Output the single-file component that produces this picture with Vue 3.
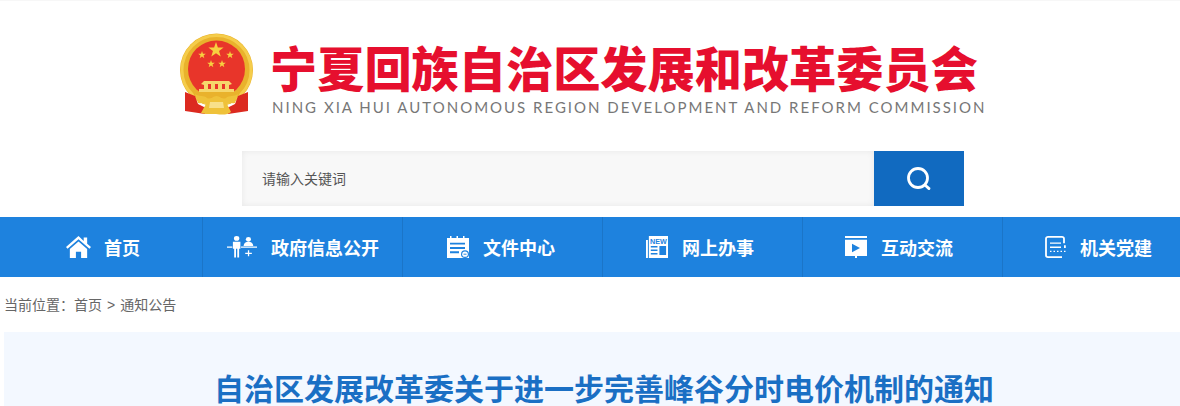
<template>
  <div class="page">
    <header class="header">
      <div class="logo">
        <svg class="emblem" width="76" height="84" viewBox="0 0 76 84">
          <circle cx="37.500" cy="38" r="36.500" fill="#e9b22c" />
          <circle cx="37.500" cy="38" r="34.500" fill="none" stroke="#f5cd4b" stroke-width="3" />
          <circle cx="37.500" cy="37" r="28.500" fill="#e8352a" />
          <polygon v-for="s in stars" :key="s.x" :points="star(s.x, s.y, s.r)" fill="#f7d040" />
          <path d="M25 49h25l3 3-3 1v4h5v4H20v-4h5v-4l-3-1z" fill="#f6d76c" />
          <path d="M29 52h3v5h-3zM36 52h3v5h-3zM43 52h3v5h-3z" fill="#e8352a" />
          <path d="M14 60h47l-2 5H16z" fill="#e9b22c" />
          <path d="M6 60l10 4 3 8 10 5-3 5-20-3zM69 60l-10 4-3 8-10 5 3 5 20-3z" fill="#dc2a20" />
          <path d="M16 62c4 3 9 1 12 4 3 2 6-2 9.500-2s6.500 4 9.500 2c3-3 8-1 12-4l-3 9c-3 1-6-1-8 1l4 8c-4 3-8 3-15 2H27l-5-1 5-9c-2-2-5 0-8-1z" fill="#efc23a" />
          <path d="M31 70h13l1 6H30z" fill="#f8e08a" />
        </svg>
        <div class="logo-text">
          <div class="logo-cn">宁夏回族自治区发展和改革委员会</div>
          <div class="logo-en">NING XIA HUI AUTONOMOUS REGION DEVELOPMENT AND REFORM COMMISSION</div>
        </div>
      </div>
      <div class="search">
        <input class="search-input" type="text" placeholder="请输入关键词" />
        <button class="search-btn" aria-label="搜索">
          <svg width="26" height="26" viewBox="0 0 26 26" fill="none" stroke="#fff" stroke-linecap="round">
            <circle cx="12" cy="12" r="9.500" stroke-width="2.800" />
            <path d="M19 19l4 3.600" stroke-width="2.800" />
          </svg>
        </button>
      </div>
    </header>

    <nav class="nav">
      <a v-for="item in navItems" :key="item.label" class="nav-item">
        <span class="nav-icon-box" :style="{ width: item.textAt + 'px', paddingLeft: item.iconAt + 'px' }">
          <svg :width="item.w" height="22" :viewBox="item.vb" preserveAspectRatio="none" v-html="item.icon"></svg>
        </span>
        <span>{{ item.label }}</span>
      </a>
    </nav>

    <div class="crumbs">当前位置：<span>首页</span><span class="sep">&gt;</span><span>通知公告</span></div>

    <section class="article">
      <h1>自治区发展改革委关于进一步完善峰谷分时电价机制的通知</h1>
    </section>
  </div>
</template>

<script setup>
const stars = [
  { x: 37, y: 18, r: 8 },
  { x: 23, y: 23, r: 4 },
  { x: 51, y: 23, r: 4 },
  { x: 32, y: 32, r: 4 },
  { x: 43, y: 32, r: 4 },
]

function star(cx, cy, r) {
  const pts = []
  for (let i = 0; i < 10; i++) {
    const rad = i % 2 ? r * 0.4 : r
    const a = -Math.PI / 2 + (i * Math.PI) / 5
    pts.push((cx + rad * Math.cos(a)).toFixed(2) + ',' + (cy + rad * Math.sin(a)).toFixed(2))
  }
  return pts.join(' ')
}

const navItems = [
  {
    label: '首页',
    iconAt: 63,
    textAt: 101,
    w: 25,
    vb: '1 2 26 23',
    icon: '<path d="M14 2L1 13.500l1.600 1.800L14 5.400l11.400 9.900 1.600-1.800-4-3.500V3.500h-3.600v3.600z" fill="#fff"/><path d="M5 15.500L14 7.800l9 7.700V25h-6.300v-6.500h-5.400V25H5z" fill="#fff"/>',
  },
  {
    label: '政府信息公开',
    iconAt: 24,
    textAt: 68,
    w: 30,
    vb: '0 .5 28 23',
    icon: '<circle cx="9" cy="3" r="2.500" fill="#fff"/><path d="M5.500 6.500h7v7.200h-1.200V23H9.600v-9.300H8.400V23H6.700v-9.300H5.500z" fill="#fff"/><circle cx="20" cy="4" r="2.400" fill="#fff"/><path d="M15.500 11c0-3 2-4.500 4.500-4.500s4.500 1.500 4.500 4.500z" fill="#fff"/><path d="M0 11.500h5v1.200H0zM13 11.500h15v1.200H13z" fill="#fff"/><path d="M19.500 15.500h1.200V18h2.500v1.200h-2.500v2.500h-1.200v-2.500H17V18h2.500z" fill="#fff"/>',
  },
  {
    label: '文件中心',
    iconAt: 44,
    textAt: 80,
    w: 22,
    vb: '2 1 22 23',
    icon: '<path d="M2 3h3V1h1.500v2h5V1H13v2h5V1h1.500v2H24v21H2z" fill="#fff"/><path d="M5 8h15v2H5zM5 12.500h15v2H5zM5 17h9v2H5z" fill="#1e82de"/><circle cx="20" cy="20" r="4" fill="#1e82de"/><circle cx="20" cy="20" r="2.800" fill="#fff"/><path d="M18.500 19.500h3v1h-3z" fill="#1e82de"/>',
  },
  {
    label: '网上办事',
    iconAt: 43,
    textAt: 79,
    w: 22,
    vb: '2 2 23 22',
    icon: '<path d="M2 6h2v18H2zM5 2h20v22H5z" fill="#fff"/><text x="15" y="9.800" text-anchor="middle" font-family="Liberation Sans, sans-serif" font-size="7.500" font-weight="700" fill="#1e82de">NEW</text><path d="M16 12h7v9h-7z" fill="#1e82de"/><path d="M7 12h7v1.500H7zM7 15.500h7V17H7zM7 19h7v1.500H7z" fill="#1e82de"/>',
  },
  {
    label: '互动交流',
    iconAt: 42,
    textAt: 78,
    w: 22,
    vb: '2 2 22 23',
    icon: '<path d="M2 2h22v2H2zM2 6h22v17H14v2h-2v-2H2z" fill="#fff"/><path d="M9 10l8 4.500-8 4.500z" fill="#1e82de"/>',
  },
  {
    label: '机关党建',
    iconAt: 42,
    textAt: 77,
    w: 21,
    vb: '2 1 21 24',
    icon: '<path d="M21 9V4a2 2 0 0 0-2-2H5a2 2 0 0 0-2 2v18a2 2 0 0 0 2 2h14" fill="none" stroke="#fff" stroke-width="1.800"/><path d="M7 8h11v1.500H7zM7 12.500h11V14H7zM7 17h1.500v1.500H7zM10.500 17H12v1.500h-1.500zM14 17h1.500v1.500H14zM17.500 17H19v1.500h-1.500zM21 17h1.500v1.500H21z" fill="#fff"/><path d="M21 11h1.800v3H21z" fill="#fff"/>',
  },
]
</script>

<style>
html,
body {
  margin: 0;
  overflow: hidden;
  background: #fff;
}
</style>

<style scoped>
.page {
  width: 1180px;
  height: 406px;
  overflow: hidden;
  font-family: "Liberation Sans", "Noto Sans CJK SC", sans-serif;
  color: #555;
}

.header {
  height: 217px;
  box-sizing: border-box;
  padding-top: 31px;
  border-top: 1px solid #f7f7f7;
}

.logo {
  display: flex;
  align-items: flex-start;
  margin-left: 179px;
  height: 119px;
}

.emblem {
  flex: none;
  margin-right: 17px;
}

.logo-text {
  padding-top: 6px;
}

.logo-cn {
  margin-left: -2px;
  font-family: "Noto Sans CJK SC", sans-serif;
  font-size: 47.200px;
  font-weight: 900;
  line-height: 57px;
  color: #e60f2e;
  white-space: nowrap;
}

.logo-en {
  margin-top: 3px;
  font-family: Lato, "Liberation Sans", sans-serif;
  font-size: 15px;
  line-height: 18px;
  letter-spacing: 2px;
  color: #777;
  white-space: nowrap;
}

.search {
  display: flex;
  width: 722px;
  height: 55px;
  margin-left: 242px;
}

.search-input {
  flex: 1;
  min-width: 0;
  box-sizing: border-box;
  padding: 0 20px;
  border: 0;
  box-shadow: inset 0 0 6px rgba(0, 0, 0, 0.07);
  background: #f8f8f8;
  outline: none;
  font-family: inherit;
  font-size: 14px;
}

.search-input::placeholder {
  color: #555;
  opacity: 1;
}

.search-btn {
  display: flex;
  align-items: center;
  justify-content: center;
  width: 90px;
  padding: 0;
  border: 0;
  background: #116ac0;
}

.nav {
  display: flex;
  width: 1203px;
  height: 60px;
  box-sizing: border-box;
  padding-left: 3px;
  background: #1e82de;
}

.nav-item {
  display: flex;
  flex: none;
  align-items: center;
  box-sizing: border-box;
  width: 200px;
  height: 60px;
  border-right: 1px solid #1b75c8;
  color: #fff;
  font-family: "Noto Sans CJK SC", sans-serif;
  font-size: 18px;
  font-weight: 700;
}

.nav-icon-box {
  display: flex;
  flex: none;
  box-sizing: border-box;
}

.crumbs {
  height: 55px;
  padding-left: 4px;
  font-size: 14px;
  line-height: 57px;
  color: #666;
}

.sep {
  margin: 0 5px;
}

.article {
  width: 1200px;
  height: 74px;
  margin-left: 4px;
  padding-top: 33px;
  box-sizing: border-box;
  background: #f3f8ff;
}

h1 {
  margin: 0;
  text-align: center;
  font-family: "Noto Sans CJK SC", sans-serif;
  font-size: 30px;
  font-weight: 700;
  line-height: 44px;
  color: #1a6fc4;
  white-space: nowrap;
}
</style>
